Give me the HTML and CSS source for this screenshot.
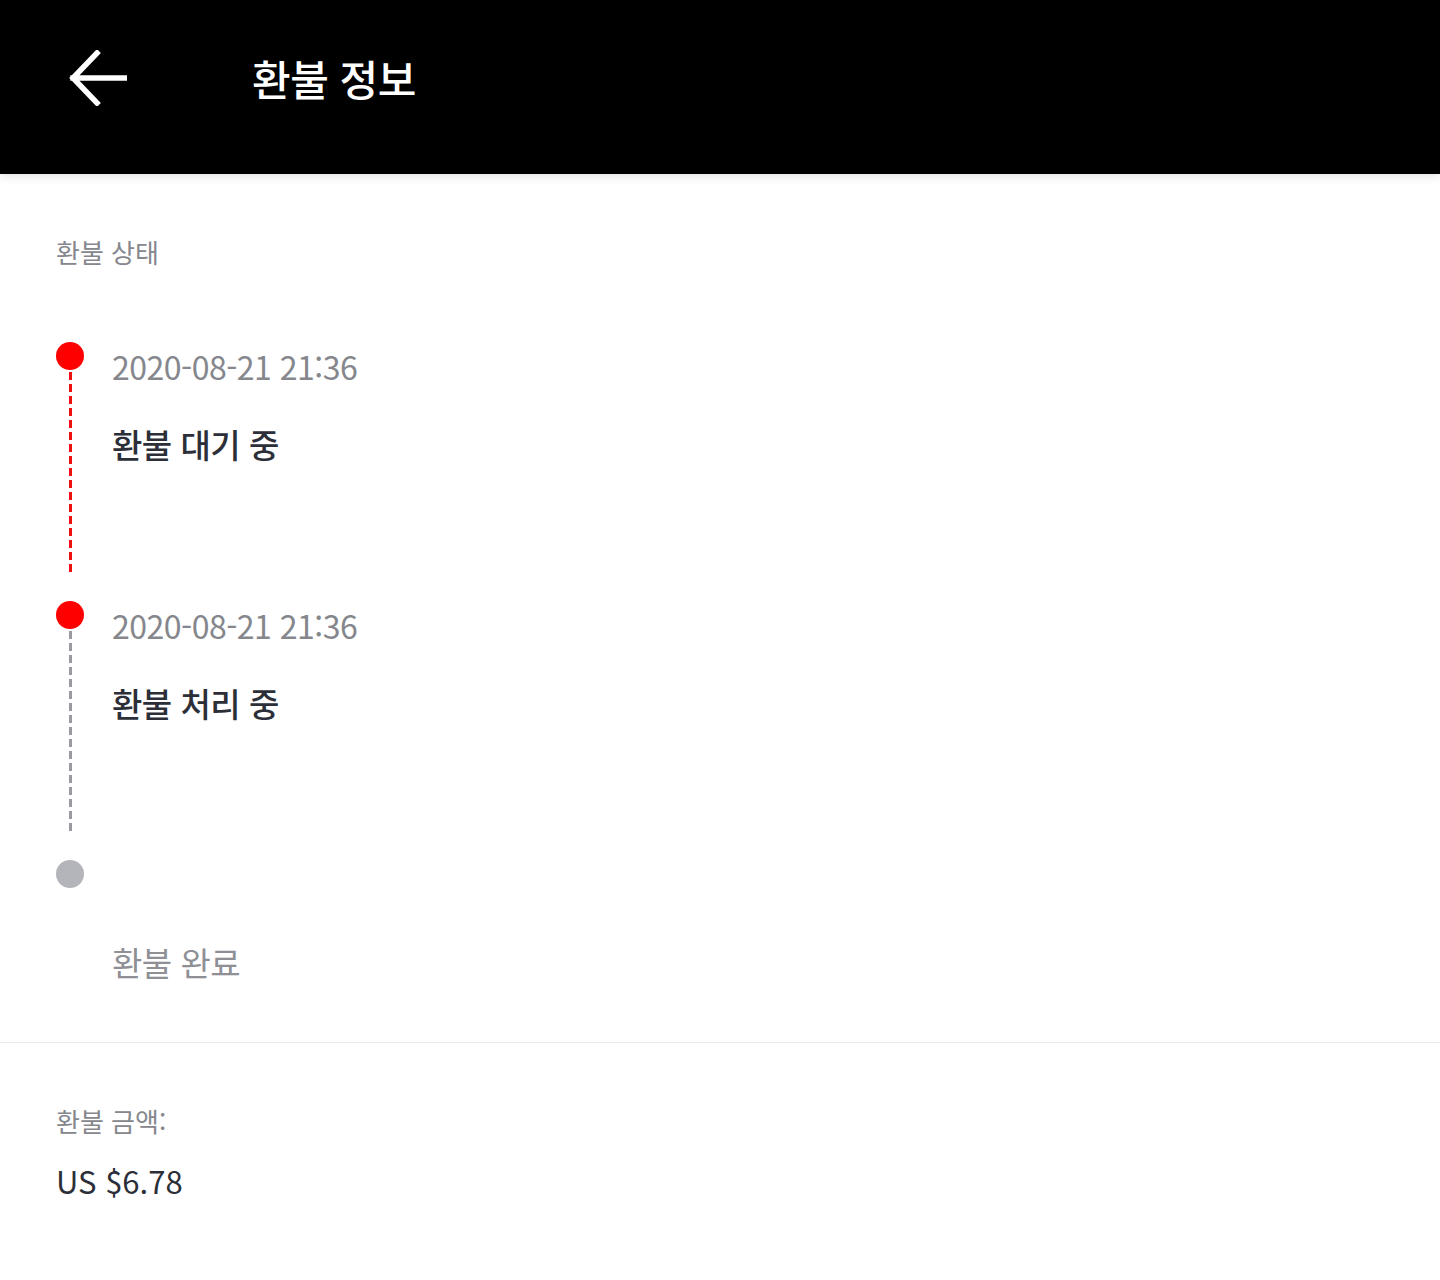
FILE: index.html
```html
<!DOCTYPE html>
<html lang="ko">
<head>
  <meta charset="UTF-8">
  <title>환불 정보</title>
  <link rel="stylesheet" href="styles.css">
</head>
<body>
  <header class="top-bar">
    <button class="back-btn" aria-label="뒤로">
      <svg width="58" height="56" viewBox="0 0 58 56">
        <path d="M4 28 H56 M28 3 L4 28 L28 53" fill="none" stroke="#fff" stroke-width="5.5" stroke-linecap="square" stroke-linejoin="miter"/>
      </svg>
    </button>
    <h1>환불 정보</h1>
  </header>

  <section class="status-section">
    <h2 class="section-label">환불 상태</h2>

    <div class="timeline">
      <div class="step">
        <div class="track">
          <span class="dot active"></span>
          <span class="line red"></span>
        </div>
        <div class="step-text">
          <div class="date">2020-08-21 21:36</div>
          <div class="status">환불 대기 중</div>
        </div>
      </div>

      <div class="step">
        <div class="track">
          <span class="dot active"></span>
          <span class="line grey"></span>
        </div>
        <div class="step-text">
          <div class="date">2020-08-21 21:36</div>
          <div class="status">환불 처리 중</div>
        </div>
      </div>

      <div class="step last">
        <div class="track">
          <span class="dot"></span>
        </div>
        <div class="step-text">
          <div class="date"></div>
          <div class="status pending">환불 완료</div>
        </div>
      </div>
    </div>
  </section>

  <section class="amount-section">
    <h2 class="section-label">환불 금액:</h2>
    <div class="amount">US $6.78</div>
  </section>
</body>
</html>
```

FILE: styles.css
```css
body {
  margin: 0;
  padding: 0;
  background: #fff;
  font-family: "Noto Sans CJK KR", "Noto Sans", sans-serif;
}

.top-bar {
  height: 174px;
  background: #000;
  display: flex;
  align-items: flex-start;
  box-shadow: 0 2px 10px rgba(0, 0, 0, 0.12);
  position: relative;
}

.back-btn {
  background: none;
  border: none;
  padding: 0;
  margin: 50px 0 0 69px;
  width: 58px;
  height: 56px;
  cursor: pointer;
}

.top-bar h1 {
  margin: 48px 0 0 125px;
  color: #fff;
  font-size: 42px;
  font-weight: 500;
  line-height: 60px;
  letter-spacing: -0.5px;
}

.section-label {
  margin: 0;
  font-size: 26px;
  font-weight: 400;
  color: #85878d;
  line-height: 32px;
}

.status-section {
  padding: 62px 56px 30px;
  border-bottom: 1px solid #e9e9ec;
}

.timeline {
  margin-top: 74px;
}

.step {
  display: flex;
  height: 259px;
}

.step.last {
  height: 152px;
}

.track {
  width: 28px;
  display: flex;
  flex-direction: column;
  align-items: center;
}

.dot {
  width: 28px;
  height: 28px;
  border-radius: 50%;
  background: #b4b5ba;
  flex-shrink: 0;
}

.dot.active {
  background: #ff0000;
}

.line {
  width: 3px;
  height: 200px;
  margin-top: 2px;
}

.line.red {
  background: repeating-linear-gradient(to bottom, #ee1010 0 8px, transparent 8px 12px);
}

.line.grey {
  background: repeating-linear-gradient(to bottom, #9a9ba0 0 8px, transparent 8px 12px);
}

.step-text {
  margin-left: 28px;
}

.date {
  height: 44px;
  font-size: 32px;
  line-height: 44px;
  color: #85878d;
  margin-top: 2px;
  letter-spacing: -0.5px;
}

.status {
  margin-top: 34px;
  font-size: 33px;
  font-weight: 500;
  line-height: 44px;
  color: #2c2f38;
  letter-spacing: -0.5px;
}

.status.pending {
  margin-top: 34px;
  font-weight: 400;
  color: #8e9096;
}

.amount-section {
  padding: 62px 56px 60px;
}

.amount {
  margin-top: 24px;
  font-size: 31px;
  line-height: 40px;
  color: #2c2f38;
}
```
